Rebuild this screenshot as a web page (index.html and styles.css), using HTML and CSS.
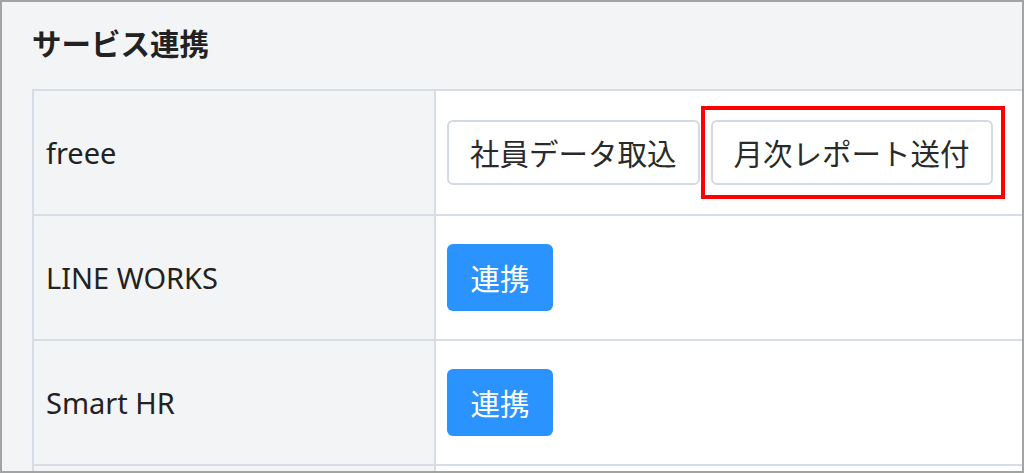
FILE: index.html
```html
<!DOCTYPE html>
<html lang="ja">
<head>
<meta charset="utf-8">
<title>サービス連携</title>
<link rel="stylesheet" href="styles.css">
</head>
<body>
<div class="frame">
  <h1 class="title">サービス連携</h1>
  <table class="services">
    <tr>
      <th class="name">freee</th>
      <td class="actions">
        <div class="btn-row">
          <button class="btn btn-outline">社員データ取込</button>
          <span class="highlight-wrap">
            <button class="btn btn-outline">月次レポート送付</button>
            <span class="highlight"></span>
          </span>
        </div>
      </td>
    </tr>
    <tr>
      <th class="name">LINE WORKS</th>
      <td class="actions"><button class="btn btn-primary">連携</button></td>
    </tr>
    <tr>
      <th class="name">Smart HR</th>
      <td class="actions"><button class="btn btn-primary">連携</button></td>
    </tr>
    <tr>
      <th class="name">&nbsp;</th>
      <td class="actions">&nbsp;</td>
    </tr>
  </table>
</div>
</body>
</html>
```
FILE: styles.css
```css
html, body {
  margin: 0;
  padding: 0;
  background: #ffffff;
}
.frame {
  box-sizing: border-box;
  width: 1024px;
  height: 473px;
  border: 2px solid #a3a3a3;
  background: #f3f4f6;
  overflow: hidden;
  padding: 0 0 0 30px;
  font-family: "Noto Sans CJK JP", "Noto Sans", sans-serif;
  color: #222;
}
.title {
  margin: 0;
  padding: 18px 0 0 0;
  height: 87px;
  box-sizing: border-box;
  font-size: 29.5px;
  font-weight: 700;
  line-height: 44px;
  color: #222;
}
.services {
  border-collapse: collapse;
  width: 1100px;
  table-layout: fixed;
}
.services tr {
  height: 125px;
}
.services th,
.services td {
  border: 2px solid #d6dde4;
  padding: 0 11px;
  vertical-align: middle;
  text-align: left;
}
.name {
  width: 377px;
  background: #f3f4f6;
  font-family: "Noto Sans", "Noto Sans CJK JP", sans-serif;
  font-weight: 400;
  font-size: 29px;
  color: #222;
}
.services th.name {
  padding-left: 12px;
}
.actions {
  background: #ffffff;
}
.btn-row {
  display: flex;
  gap: 11px;
  align-items: center;
}
.btn {
  font-family: "Noto Sans CJK JP", "Noto Sans", sans-serif;
  font-size: 29.5px;
  border-radius: 6px;
  height: 65px;
  padding: 0 21px;
  box-sizing: border-box;
  cursor: pointer;
  line-height: 1;
}
.btn-outline {
  background: #ffffff;
  border: 2px solid #d3dae2;
  color: #2a2a2a;
}
.btn-primary {
  background: #2b93fd;
  border: none;
  color: #ffffff;
  height: 67px;
  padding: 0 23.5px;
}
.highlight-wrap {
  position: relative;
  display: inline-block;
}
.highlight-wrap .btn {
  display: block;
}
.highlight {
  position: absolute;
  left: -10px;
  top: -14px;
  right: -12px;
  bottom: -14px;
  border: 4px solid #ff0000;
  pointer-events: none;
}
```
